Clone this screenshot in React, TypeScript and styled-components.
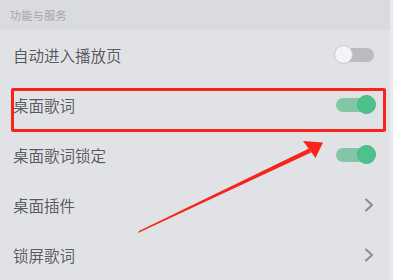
import { createGlobalStyle } from "styled-components";
import styled from "styled-components";

const GlobalStyle = createGlobalStyle`
  html, body {
    margin: 0;
    padding: 0;
    background: #e1e2e6;
  }
  body {
    font-family: "Noto Sans CJK SC", "Noto Sans", sans-serif;
  }
`;

interface IRow {
  label: string;
  kind: "off" | "on" | "arrow";
}

const rows: IRow[] = [
  { label: "自动进入播放页", kind: "off" },
  { label: "桌面歌词", kind: "on" },
  { label: "桌面歌词锁定", kind: "on" },
  { label: "桌面插件", kind: "arrow" },
  { label: "锁屏歌词", kind: "arrow" },
];

function App() {
  return (
    <>
      <GlobalStyle />
      <Screen>
        <SectionHeader>功能与服务</SectionHeader>
        <List>
          {rows.map((row) => (
            <Row key={row.label}>
              <Label>{row.label}</Label>
              {row.kind === "arrow" ? (
                <Chevron viewBox="0 0 10 14">
                  <path d="M2 1.5 L8 7 L2 12.5" />
                </Chevron>
              ) : (
                <Switch $on={row.kind === "on"}>
                  <Knob $on={row.kind === "on"} />
                </Switch>
              )}
            </Row>
          ))}
        </List>

        {/* annotation: red box + arrow drawn over the screenshot */}
        <Highlight />
        <ArrowSvg viewBox="0 0 393 280">
          <polygon points="138,233 139,231 309,148.5 311,152.5" />
          <polygon points="323,142.5 303,141 315.5,158" />
        </ArrowSvg>
      </Screen>
    </>
  );
}

const Screen = styled.div`
  position: relative;
  width: 393px;
  height: 280px;
  overflow: hidden;
  background: #e1e2e6;
  border-right: 3px solid #e9eaee;
  box-sizing: border-box;
`;

const SectionHeader = styled.div`
  height: 30px;
  display: flex;
  align-items: center;
  padding-left: 10px;
  font-size: 11px;
  color: #a2a3a8;
  background: #dadbdf;
  letter-spacing: 0.4px;
`;

const List = styled.div`
  display: flex;
  flex-direction: column;
`;

const Row = styled.div`
  height: 50px;
  display: flex;
  align-items: center;
  justify-content: space-between;
  padding: 0 15px 0 13px;
`;

const Label = styled.span`
  font-size: 15.5px;
  color: #58595c;
  text-shadow: 0 0 1px #fff;
`;

const Switch = styled.div<{ $on: boolean }>`
  position: relative;
  width: 39px;
  height: 14px;
  border-radius: 7px;
  margin-right: ${(p) => (p.$on ? "0" : "1px")};
  background: ${(p) => (p.$on ? "#82c6a6" : "#babbc0")};
`;

const Knob = styled.div<{ $on: boolean }>`
  position: absolute;
  top: -3px;
  ${(p) => (p.$on ? "right: -1px;" : "left: -1px;")}
  width: 19px;
  height: 19px;
  border-radius: 50%;
  box-sizing: border-box;
  background: ${(p) => (p.$on ? "#4fc18d" : "#f4f4f6")};
  border: 1px solid ${(p) => (p.$on ? "#47b482" : "#c9cacd")};
`;

const Chevron = styled.svg`
  width: 10px;
  height: 14px;
  margin-right: 1px;
  path {
    fill: none;
    stroke: #8a8b8f;
    stroke-width: 2;
    stroke-linecap: round;
    stroke-linejoin: round;
  }
`;

const Highlight = styled.div`
  position: absolute;
  left: 11px;
  top: 88px;
  width: 375px;
  height: 44px;
  box-sizing: border-box;
  border: 3px solid #f8231a;
  border-radius: 2px;
`;

const ArrowSvg = styled.svg`
  position: absolute;
  left: 0;
  top: 0;
  width: 393px;
  height: 280px;
  polygon {
    fill: #f8231a;
  }
`;

export default App;
